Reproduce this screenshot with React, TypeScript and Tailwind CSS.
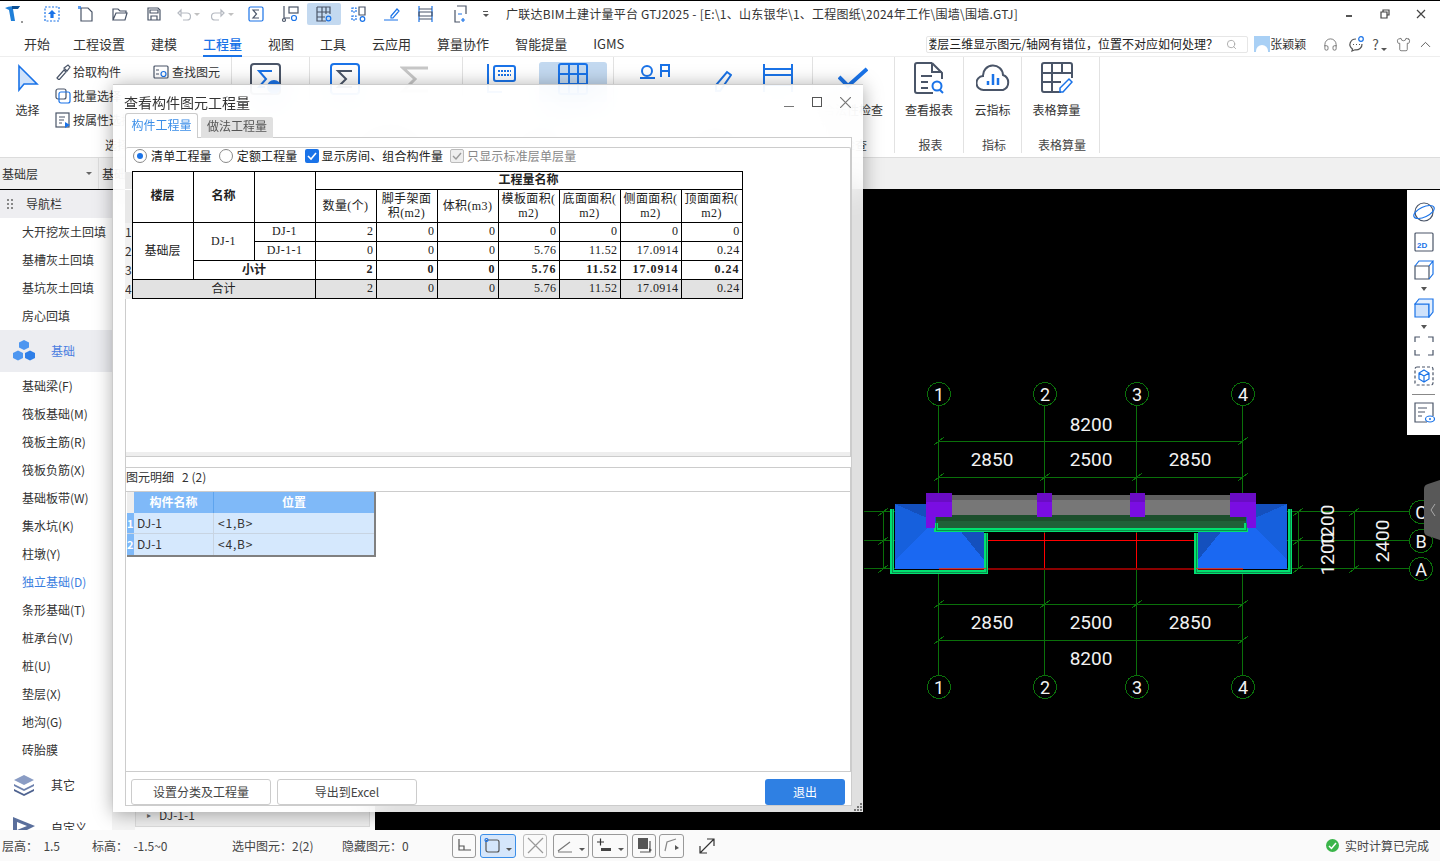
import type { ReactNode } from 'react';
import { ChevronUp, Search, Shirt, Headphones } from 'lucide-react';

const DARK = '#4a5568';
const BLUE = '#1a73e8';

// small svg wrapper, viewBox is always the same as the size so paths stay in pixels
function Ico({ s = 18, children, className = '' }: { s?: number; children: ReactNode; className?: string }) {
    return (
        <svg width={s} height={s} viewBox={`0 0 ${s} ${s}`} fill="none" strokeWidth={1.2} className={`shrink-0 ${className}`}>
            {children}
        </svg>
    );
}

function Caret({ color = '#666' }: { color?: string }) {
    return <span className="inline-block w-0 h-0 border-x-[3px] border-x-transparent border-t-[3px]" style={{ borderTopColor: color }} />;
}

/* ---------- title bar ---------- */
const quickIcons: ReactNode[] = [
    <Ico key="a"><rect x="2" y="2" width="14" height="14" stroke={BLUE} strokeDasharray="2 1.5" /><path d="M9 5l4 4h-2.4v4H7.4V9H5z" fill={BLUE} /></Ico>,
    <Ico key="b"><path d="M4 3h7l4 4v9H4z" stroke={DARK} /><path d="M1 1h3v3H1z" fill={BLUE} opacity=".7" /></Ico>,
    <Ico key="c"><path d="M2 15V4h5l2 2h6v2M2 15h12l2-7H5z" stroke={DARK} /></Ico>,
    <Ico key="d"><path d="M3 3h10l2 2v10H3z" stroke={DARK} /><path d="M6 15v-4h6v4M5 5h8v3H5z" stroke={DARK} /></Ico>,
    <span key="e" className="flex items-center gap-[3px] opacity-40"><Ico s={14}><path d="M4 6h6a3 3 0 010 7H6M1 6l3-3v6z" stroke={DARK} /></Ico><Caret /></span>,
    <span key="f" className="flex items-center gap-[3px] opacity-40"><Ico s={14}><path d="M10 6H4a3 3 0 000 7h4M13 6l-3-3v6z" stroke={DARK} /></Ico><Caret /></span>,
    <Ico key="g"><rect x="2" y="2" width="14" height="14" rx="1.5" stroke={BLUE} /><path d="M12 5H6l3.5 4L6 13h6" stroke={DARK} /></Ico>,
    <Ico key="h"><path d="M3 1v12h6" stroke={DARK} /><rect x="8" y="2" width="9" height="6" stroke={DARK} /><circle cx="3" cy="15" r="1.5" stroke={DARK} /><circle cx="13" cy="13" r="2.5" stroke={BLUE} /></Ico>,
    <Ico key="i"><path d="M2 2h13v7M2 2v14h9M2 7h13M2 12h8M7 2v14M11 2v7" stroke={DARK} /><circle cx="13.5" cy="13.5" r="2.3" stroke={BLUE} /></Ico>,
    <Ico key="j"><path d="M3 3h4v4H3zM3 11h4v4H3z" stroke={BLUE} strokeDasharray="2 1" /><path d="M10 2h6v8h-6z" stroke={DARK} /><circle cx="13.5" cy="14" r="2.3" stroke={BLUE} /></Ico>,
    <Ico key="k"><path d="M8 11l6-7 2 2-6 7H8zM1 15h14" stroke={BLUE} /></Ico>,
    <Ico key="l"><path d="M2 1v16M15 1v16" stroke={BLUE} /><path d="M2 4h13M2 14h13M2 7h13v4H2z" stroke={DARK} /></Ico>,
    <Ico key="m"><path d="M6 1h9v8M4 5v12h5" stroke={DARK} /><path d="M12 13v4M10 15h4M7 9h4" stroke={BLUE} /></Ico>,
];

function TitleBar() {
    return (
        <div className="h-[29px] border-t border-black bg-white flex items-center pb-[2px] shrink-0">
            <div className="w-[35px] pl-[4px] flex items-center">
                <svg width="20" height="20" viewBox="0 0 20 20"><path d="M1 4c4-2 10-2 15-2l-3 3H9l2 12H7L5 6z" fill="#1f7fd8" /><path d="M8 2h8l-2 3H8z" fill="#0c4f94" /><circle cx="18" cy="18" r="1" fill="#777" /></svg>
            </div>
            {quickIcons.map((icon, i) => (
                <div key={i} className={`w-[34px] h-[22px] flex items-center justify-center rounded-[2px] ${i === 8 ? 'bg-[#c3d9f0]' : ''}`}>
                    {icon}
                </div>
            ))}
            <div className="ml-[6px] w-[23px] flex flex-col items-start gap-[2px]">
                <span className="w-[5px] h-px bg-[#555]" />
                <Caret color="#555" />
            </div>
            <div className="text-[12px] text-[#333] whitespace-nowrap tracking-[0.25px]">广联达BIM土建计量平台 GTJ2025 - [E:\1、山东银华\1、工程图纸\2024年工作\围墙\围墙.GTJ]</div>
            <div className="ml-auto flex items-center text-[#444]">
                <div className="w-[37px] flex justify-center"><span className="w-[6px] h-[2px] bg-[#555] mt-[3px]" /></div>
                <div className="w-[36px] flex justify-center">
                    <Ico s={10}><path d="M3 3V1h6v5H7M1 3h6v6H1z" stroke="#444" /></Ico>
                </div>
                <div className="w-[35px] mr-[2px] flex justify-center">
                    <Ico s={10}><path d="M1 1l8 8M9 1l-8 8" stroke="#444" /></Ico>
                </div>
            </div>
        </div>
    );
}

/* ---------- menu bar ---------- */
const menus = ['开始', '工程设置', '建模', '工程量', '视图', '工具', '云应用', '算量协作', '智能提量', 'IGMS'];

function MenuBar() {
    return (
        <div className="h-[28px] bg-white border-b border-[#eee] flex items-stretch shrink-0">
            <div className="flex gap-[26px] pl-[24px] text-[13px] text-[#333]">
                {menus.map(m => (
                    <div key={m} className={`flex items-center pt-[4px] -mb-px border-b-2 ${m === '开始' ? '-mr-[3px]' : ''} ${m === '工程量' ? 'text-[#1a73e8] font-medium border-[#1a73e8]' : 'border-transparent'}`}>{m}</div>
                ))}
            </div>
            <div className="ml-auto flex items-center pr-[6px] pt-[3px]">
                <div className="w-[322px] h-[17px] bg-white border border-[#e6e6e6] rounded-[2px] flex items-center pr-[10px] text-[12px] text-[#222] whitespace-nowrap">
                    {/* the first glyph is clipped in the app as well */}
                    <div className="ml-[2px] flex-1 min-w-0 overflow-hidden">
                        <span className="block -ml-[4px]">楼层三维显示图元/轴网有错位，位置不对应如何处理？</span>
                    </div>
                    <Search size={11} className="text-[#aaa]" />
                </div>
                <div className="ml-[6px] w-[16px] h-[16px] bg-[#a9d0f5] flex items-end justify-center overflow-hidden">
                    <span className="w-[12px] h-[7px] rounded-t-full bg-white" />
                </div>
                <span className="text-[12px] text-[#333]">张颖颖</span>
                <Headphones size={15} strokeWidth={1.2} className="ml-[17px] text-[#555]" />
                <Ico s={16} className="ml-[10px]">
                    <path d="M8 3a6 5.500 0 00-3.500 10L4 15l3-1.200A6 5.500 0 0014 8" stroke="#555" />
                    <path d="M5 8.500h1M8 8.500h1M11 8.500h1" stroke="#555" />
                    <circle cx="13" cy="3" r="2.300" stroke={BLUE} />
                </Ico>
                <span className="ml-[8px] text-[14px] text-[#555] leading-none">?</span>
                <span className="ml-[2px]"><Caret color="#555" /></span>
                <Shirt size={15} strokeWidth={1.2} className="ml-[9px] text-[#555]" />
                <ChevronUp size={17} strokeWidth={1.2} className="ml-[6px] text-[#444]" />
            </div>
        </div>
    );
}

/* ---------- ribbon ---------- */
function Group({ w, label, children, row = false }: { w: number; label: string; children: ReactNode; row?: boolean }) {
    return (
        <div className="flex flex-col shrink-0 mb-[4px] border-r border-[#e2e2e2]" style={{ width: w }}>
            <div className={`flex-1 min-h-0 ${row ? 'flex' : ''}`}>{children}</div>
            <div className="h-[16px] pl-[3px] text-center text-[12px] text-[#444] leading-[16px]">{label}</div>
        </div>
    );
}

function BigTool({ icon, text, w }: { icon: ReactNode; text: string; w?: number }) {
    return (
        <div className="flex flex-col items-center pt-[5px] text-[12px] text-[#333] mx-auto" style={{ width: w }}>
            <div className="h-[32px] flex items-center">{icon}</div>
            <div className="mt-[7px] whitespace-nowrap">{text}</div>
        </div>
    );
}

function Ribbon() {
    return (
        <div className="h-[101px] bg-white border-b border-[#dcdcdc] flex shrink-0">
            <Group w={232} label="选择" row>
                <div className="w-[55px] shrink-0">
                    <BigTool text="选择" w={55} icon={
                        <svg width="22" height="28" viewBox="0 0 22 28"><path d="M2 2l18 18H7l-5 6z" fill="#cfe2fb" stroke={BLUE} strokeWidth="1.6" /></svg>
                    } />
                </div>
                <div className="w-[98px] shrink-0 text-[12px] text-[#333] pt-[3px]">
                    {[
                        { t: '拾取构件', i: <path d="M2 14l7-8 2 2-7 8zM9 4l3 3 3-4-2-2z" stroke={DARK} /> },
                        { t: '批量选择', i: <><rect x="1" y="1" width="10" height="10" rx="2" stroke={DARK} /><rect x="4" y="4" width="11" height="11" rx="2" stroke={BLUE} /></> },
                        { t: '按属性选择', i: <><rect x="1" y="1" width="13" height="14" stroke={DARK} /><path d="M4 5h6M4 8h5M4 11h3" stroke={DARK} /><path d="M10 10l5 3-5 3z" fill={BLUE} /></> },
                    ].map(x => (
                        <div key={x.t} className="h-[24px] flex items-center gap-[2px] whitespace-nowrap"><Ico s={16}>{x.i}</Ico>{x.t}</div>
                    ))}
                </div>
                <div className="text-[12px] text-[#333] pt-[3px]">
                    <div className="h-[24px] flex items-center gap-[3px] whitespace-nowrap">
                        <Ico s={16}><rect x="1" y="2" width="14" height="12" rx="1" stroke={DARK} /><path d="M3 6h3M3 10h3" stroke={DARK} /><circle cx="10.500" cy="10" r="2.500" stroke={BLUE} /></Ico>
                        查找图元
                    </div>
                </div>
            </Group>
            <Group w={78} label="汇总" row>
                <div className="pl-[18px] pt-[6px]">
                    <svg width="32" height="32" viewBox="0 0 32 32" fill="none" strokeWidth="2"><rect x="1" y="1" width="29" height="30" rx="3" stroke={DARK} /><path d="M22 8H9l7 8-7 8h6" stroke={BLUE} /><circle cx="24" cy="24" r="7" fill={BLUE} /></svg>
                </div>
            </Group>
            <Group w={153} label="土建计算" row>
                <div className="pl-[20px] pt-[6px]">
                    <svg width="30" height="32" viewBox="0 0 30 32" fill="none" strokeWidth="2"><rect x="1" y="1" width="28" height="30" rx="3" stroke={BLUE} /><path d="M22 8H8l8 8-8 8h14" stroke={DARK} /></svg>
                </div>
                <div className="pl-[40px] pt-[7px]">
                    <svg width="30" height="30" viewBox="0 0 30 30" fill="none" strokeWidth="3"><path d="M28 4H3l12 11L3 27h25" stroke="#c8c8c8" /></svg>
                </div>
            </Group>
            <Group w={151} label="查询" row>
                <div className="pl-[24px] pt-[6px]">
                    <svg width="30" height="30" viewBox="0 0 30 30" fill="none" strokeWidth="2"><path d="M1 1v28h14" stroke={BLUE} /><rect x="7" y="3" width="21" height="15" rx="2" stroke={BLUE} /><path d="M11 8h13M11 12h13" stroke={BLUE} strokeDasharray="2 1" /></svg>
                </div>
                <div className="ml-[22px] mt-[5px] w-[68px] h-[40px] bg-[#c3d9f0] rounded-t-[3px] flex justify-center pt-[1px]">
                    <svg width="30" height="32" viewBox="0 0 30 32" fill="none" strokeWidth="2"><rect x="1" y="1" width="28" height="30" rx="2" stroke={BLUE} /><path d="M1 11h28M1 21h28M11 1v30M20 1v30" stroke={BLUE} /></svg>
                </div>
            </Group>
            <Group w={199} label="查看" row>
                <div className="pl-[25px] pt-[6px]">
                    <svg width="32" height="30" viewBox="0 0 32 30" fill="none" strokeWidth="2"><circle cx="8" cy="8" r="5" stroke={BLUE} /><path d="M1 15h15M22 14V2h8v12M22 8h8" stroke={BLUE} /></svg>
                </div>
                <div className="pl-[43px] pt-[12px]">
                    <svg width="18" height="24" viewBox="0 0 18 24" fill="none" strokeWidth="2"><path d="M2 22V16L13 3l4 3L6 22z" stroke={BLUE} /></svg>
                </div>
                <div className="pl-[31px] pt-[6px]">
                    <svg width="30" height="30" viewBox="0 0 30 30" fill="none" strokeWidth="2"><path d="M1 1v28M29 1v28" stroke={BLUE} /><path d="M1 6h28M1 12h28M1 22h28" stroke={BLUE} /></svg>
                </div>
            </Group>
            <Group w={82} label="检查" row>
                <div className="pl-[25px] pt-[10px]">
                    <svg width="30" height="22" viewBox="0 0 30 22" fill="none" strokeWidth="4"><path d="M1 10l9 9L29 2" stroke={BLUE} /></svg>
                    <div className="mt-[12px] ml-[-15px] text-[12px] text-[#333] whitespace-nowrap">合法性检查</div>
                </div>
            </Group>
            <Group w={69} label="报表">
                <BigTool text="查看报表" icon={
                    <svg width="32" height="32" viewBox="0 0 32 32" fill="none" strokeWidth="2"><path d="M19 1H4a2 2 0 00-2 2v26a2 2 0 002 2h16M19 1l10 10v6M19 1v9h10" stroke={DARK} /><path d="M8 14h11M8 20h7M8 26h7" stroke={DARK} /><circle cx="24" cy="24" r="4.500" stroke={BLUE} /><path d="M27 28l3 3" stroke={BLUE} /></svg>
                } />
            </Group>
            <Group w={58} label="指标">
                <BigTool text="云指标" icon={
                    <svg width="34" height="30" viewBox="0 0 34 30" fill="none" strokeWidth="2"><path d="M9 27H8a7 7 0 01-1-14 10 10 0 0120-1 8 8 0 010 15z" stroke={DARK} /><path d="M12 22v-4M17 22V11M22 22v-7" stroke={BLUE} strokeWidth="2.500" /></svg>
                } />
            </Group>
            <Group w={78} label="表格算量">
                <div className="pr-[8px]">
                    <BigTool text="表格算量" icon={
                        <svg width="32" height="32" viewBox="0 0 32 32" fill="none" strokeWidth="2"><path d="M20 30H3a2 2 0 01-2-2V3a2 2 0 012-2h26a2 2 0 012 2v13M1 11h30M1 20h19M11 1v29M21 1v10" stroke={DARK} /><path d="M19 30v-4l9-9 3 3-9 10z" stroke={BLUE} strokeWidth="1.500" /></svg>
                    } />
                </div>
            </Group>
        </div>
    );
}

/* ---------- navigation ---------- */
const navTop = ['大开挖灰土回填', '基槽灰土回填', '基坑灰土回填', '房心回填'];
const navFoundation = ['基础梁(F)', '筏板基础(M)', '筏板主筋(R)', '筏板负筋(X)', '基础板带(W)', '集水坑(K)', '柱墩(Y)', '独立基础(D)', '条形基础(T)', '桩承台(V)', '桩(U)', '垫层(X)', '地沟(G)', '砖胎膜'];

function NavItem({ text }: { text: string }) {
    return <div className={`h-[28px] pl-[22px] flex items-center whitespace-nowrap ${text === '独立基础(D)' ? 'text-[#3a7ee0]' : ''}`}>{text}</div>;
}

function Sidebar() {
    return (
        <div className="w-[112px] bg-white text-[12px] text-[#333] shrink-0 overflow-hidden">
            <div className="h-[28px] bg-[#eeeef1] flex items-center pl-[7px]">
                <span className="grid grid-cols-2 gap-[2px] mr-[13px]">
                    {[0, 1, 2, 3, 4, 5].map(i => <span key={i} className="w-[2px] h-[2px] bg-[#888]" />)}
                </span>
                导航栏
            </div>
            {navTop.map(n => <NavItem key={n} text={n} />)}
            <div className="h-[42px] bg-[#ecedf1] flex items-center pl-[12px] gap-[15px] text-[#4a7de0]">
                <svg width="24" height="24" viewBox="0 0 24 24">
                    <path d="M12 1l5 2.500v5L12 11 7 8.500v-5z" fill="#4d96f0" />
                    <path d="M6 11.500l5 2.500v5l-5 2.500-5-2.500v-5z" fill="#4d96f0" />
                    <path d="M18 11.500l5 2.500v5l-5 2.500-5-2.500v-5z" fill="#2f7fe8" />
                </svg>
                基础
            </div>
            {navFoundation.map(n => <NavItem key={n} text={n} />)}
            <div className="h-[40px] mt-[1px] flex items-center pl-[12px] gap-[15px]">
                <svg width="24" height="24" viewBox="0 0 24 24">
                    <path d="M12 2l10 5-10 5L2 7z" fill="#8a9cc4" />
                    <path d="M2 11l10 5 10-5v2l-10 5-10-5z" fill="#6d81ad" />
                    <path d="M2 16l10 5 10-5v2l-10 5-10-5z" fill="#4f6390" />
                </svg>
                其它
            </div>
            <div className="h-[40px] flex items-start pl-[12px] gap-[15px] pt-[2px]">
                <svg width="24" height="22" viewBox="0 0 24 22" className="mt-[9px]"><path d="M1 1l22 9L1 21z" fill="#5a6f9c" /><path d="M5 6l10 4-10 4z" fill="#fff" /></svg>
                <span className="mt-[12px]">自定义</span>
            </div>
        </div>
    );
}

/* ---------- canvas ---------- */
const gridXs = [939, 1045, 1137, 1243];
const G = '#0a700a';

function Bubble({ x, y, t }: { x: number; y: number; t: string }) {
    return (
        <>
            <circle cx={x} cy={y} r="11.5" stroke={G} fill="#000" />
            <text x={x} y={y + 6.5} textAnchor="middle" fill="#f2f2f2" fontSize="18" fontFamily="Roboto, sans-serif">{t}</text>
        </>
    );
}

function DimText({ x, y, t }: { x: number; y: number; t: string }) {
    return <text x={x} y={y + 7} textAnchor="middle" fill="#f2f2f2" fontSize="19" fontFamily="Roboto, sans-serif">{t}</text>;
}

function Tick({ x, y }: { x: number; y: number }) {
    return <path d={`M${x - 5} ${y + 4}L${x + 5} ${y - 4}`} stroke={G} />;
}

function Block({ flip }: { flip?: boolean }) {
    return (
        <g transform={flip ? 'matrix(-1 0 0 1 2182 0)' : undefined}>
            <rect x="895" y="504" width="89" height="65" fill="#1450bd" />
            <path d="M895 504L927 518V528L895 560z" fill="#1660dd" />
            <path d="M895 560L927 528H958L984 560z" fill="#1a68f2" />
            <rect x="895" y="560" width="89" height="9" fill="#1a6af5" />
            <path d="M892 509V572H986V533" fill="none" stroke="#00e070" strokeWidth="4" />
            <path d="M892 509V572H986V533" fill="none" stroke="#0c8f4c" strokeWidth="1" />
        </g>
    );
}

function CadCanvas() {
    return (
        <div className="relative flex-1 bg-black overflow-hidden">
            <svg width="1065" height="640" viewBox="375 190 1065 640" className="block" shapeRendering="crispEdges">
                {/* grid lines */}
                {gridXs.map(x => <rect key={x} x={x - 1} y="405" width="1" height="271" fill={G} />)}
                {[512, 541, 569].map(y => <rect key={y} x="864" y={y - 1} width="546" height="1" fill={G} />)}
                {[441, 477, 604, 640].map(y => <rect key={y} x="939" y={y} width="304" height="1" fill={G} />)}
                {[441, 640].flatMap(y => [939, 1243].map(x => <Tick key={`${x}${y}`} x={x} y={y} />))}
                {[477, 604].flatMap(y => gridXs.map(x => <Tick key={`${x}${y}`} x={x} y={y} />))}
                {/* vertical dimensions */}
                {[883, 1298, 1354].map(x => <rect key={x} x={x} y="512" width="1" height="57" fill={G} />)}
                {[512, 541, 569].flatMap(y => [883, 1298].map(x => <Tick key={`${x}${y}`} x={x} y={y} />))}
                <Tick x={1354} y={512} />
                <Tick x={1354} y={569} />
                <rect x="895" y="534" width="392" height="36" fill="#000" />
                {/* red beams */}
                <rect x="984" y="540" width="214" height="1" fill="#ff0000" />
                <rect x="1044" y="533" width="1" height="35" fill="#ff0000" />
                <rect x="1136" y="533" width="1" height="35" fill="#ff0000" />
                <rect x="939" y="568" width="304" height="2" fill="#8b0000" />
                <Block />
                <Block flip />
                <rect x="939" y="568" width="47" height="1" fill="#c04040" />
                <rect x="1196" y="568" width="47" height="1" fill="#c04040" />
                {/* wall */}
                <rect x="952" y="495" width="278" height="5" fill="#5f5f5f" />
                <rect x="952" y="500" width="278" height="15" fill="#777" />
                {/* strip */}
                <rect x="936" y="515" width="310" height="6" fill="#1c4f2d" />
                <rect x="936" y="521" width="310" height="8" fill="#206038" />
                <path d="M936 523V530H1246V523" fill="none" stroke="#00e070" strokeWidth="4" />
                <path d="M936 523V530H1246V523" fill="none" stroke="#0c8f4c" strokeWidth="1" />
                {/* columns */}
                {[
                    [926, 26], [1037, 15], [1130, 15], [1230, 26],
                ].map(([x, w]) => (
                    <g key={x}>
                        <rect x={x} y="493" width={w} height="9" fill="#6a0cc4" />
                        <rect x={x} y="502" width={w} height="15" fill="#7a0de2" />
                    </g>
                ))}
                <rect x="926" y="517" width="9" height="11" fill="#7a0de2" />
                <rect x="1247" y="517" width="9" height="11" fill="#7a0de2" />
                {gridXs.map((x, i) => <Bubble key={x} x={x} y={394} t={String(i + 1)} />)}
                {gridXs.map((x, i) => <Bubble key={x} x={x} y={687} t={String(i + 1)} />)}
                {[['C', 512], ['B', 541], ['A', 569]].map(([t, y]) => <Bubble key={t} x={1421} y={y as number} t={t as string} />)}
                {[['2850', 992], ['2500', 1091], ['2850', 1190]].map(([t, x]) => (
                    <g key={String(x)}>
                        <DimText x={x as number} y={459} t={t as string} />
                        <DimText x={x as number} y={622} t={t as string} />
                    </g>
                ))}
                <DimText x={1091} y={424} t="8200" />
                <DimText x={1091} y={658} t="8200" />
                <text transform="translate(1334 554) rotate(-90)" textAnchor="middle" fill="#f2f2f2" fontSize="19" fontFamily="Roboto, sans-serif">1200</text>
                <text transform="translate(1334 526) rotate(-90)" textAnchor="middle" fill="#f2f2f2" fontSize="19" fontFamily="Roboto, sans-serif">1200</text>
                <text transform="translate(1389 541) rotate(-90)" textAnchor="middle" fill="#f2f2f2" fontSize="19" fontFamily="Roboto, sans-serif">2400</text>
                {/* collapse handle */}
                <path d="M1440 480L1428 484Q1424 485 1424 489V531Q1424 535 1428 536L1440 540z" fill="#585858" shapeRendering="auto" />
                <path d="M1435 504L1431 510L1435 516" stroke="#aaa" fill="none" shapeRendering="auto" />
            </svg>
            <ViewTools />
        </div>
    );
}

function ViewTools() {
    return (
        <div className="absolute right-0 top-0 w-[33px] h-[245px] bg-white flex flex-col items-center pt-[11px]">
            <Ico s={22}>
                <ellipse cx="11" cy="11" rx="9" ry="9" stroke={DARK} />
                <ellipse cx="11" cy="11" rx="11" ry="5" transform="rotate(-25 11 11)" stroke={BLUE} />
            </Ico>
            <Ico s={20} className="mt-[9px]">
                <rect x="1" y="1" width="18" height="18" rx="1" stroke={DARK} />
                <text x="3" y="16" fontSize="8" fontWeight="700" fill={BLUE} fontFamily="Liberation Sans, sans-serif">2D</text>
            </Ico>
            <Ico s={20} className="mt-[8px]">
                <path d="M1 6h14v13H1z" stroke={DARK} />
                <path d="M1 6l4-5h14l-4 5M15 19l4-5V1" stroke={BLUE} />
            </Ico>
            <span className="mt-[7px]"><span className="block w-0 h-0 border-x-[3.5px] border-x-transparent border-t-[4px] border-t-[#555]" /></span>
            <Ico s={20} className="mt-[7px]">
                <path d="M1 6h14v13H1z" fill="#cfe2fb" stroke={BLUE} />
                <path d="M1 6l4-5h14v13l-4 5V6z" fill="#e4effd" stroke={BLUE} />
            </Ico>
            <span className="mt-[7px]"><span className="block w-0 h-0 border-x-[3.5px] border-x-transparent border-t-[4px] border-t-[#555]" /></span>
            <Ico s={20} className="mt-[7px]">
                <path d="M1 6V1h5M14 1h5v5M1 14v5h5M14 19h5v-5" stroke={DARK} />
            </Ico>
            <Ico s={20} className="mt-[10px]">
                <rect x="1" y="1" width="18" height="18" rx="2" stroke={DARK} strokeDasharray="3 2" />
                <path d="M10 4l5 3v6l-5 3-5-3V7zM5 7l5 3 5-3M10 10v6" stroke={BLUE} />
            </Ico>
            <span className="w-[23px] h-px bg-[#888] mt-[8px]" />
            <Ico s={22} className="mt-[7px]">
                <path d="M14 20H2V1h18v13" stroke={DARK} />
                <path d="M5 6h9M5 10h7M5 14h4" stroke={DARK} />
                <ellipse cx="17" cy="17" rx="4.500" ry="3" stroke={BLUE} />
                <circle cx="17" cy="17" r="1" fill={BLUE} />
            </Ico>
        </div>
    );
}

/* ---------- quantity dialog ---------- */
const SERIF = "font-['Liberation_Serif','Noto_Sans_CJK_SC',serif] text-[12px] tracking-[0.4px]";
const CELL = 'border border-black p-0 px-[2px] pb-[2px] leading-none';
const HEADS: ReactNode[] = [
    <>数量(个)</>,
    <>脚手架面<br />积(m2)</>,
    <>体积(m3)</>,
    <>模板面积(<br />m2)</>,
    <>底面面积(<br />m2)</>,
    <>侧面面积(<br />m2)</>,
    <>顶面面积(<br />m2)</>,
];
const rowA = ['2', '0', '0', '0', '0', '0', '0'];
const rowB = ['0', '0', '0', '5.76', '11.52', '17.0914', '0.24'];
const rowC = ['2', '0', '0', '5.76', '11.52', '17.0914', '0.24'];

function Num({ rows, bold }: { rows: string[]; bold?: boolean }) {
    return (
        <>
            {rows.map((v, i) => (
                <td key={i} className={`${CELL} text-right ${SERIF} ${bold ? 'font-bold !tracking-[1px]' : ''}`}>{v}</td>
            ))}
        </>
    );
}

function RowNo({ n }: { n: number }) {
    return <td className="w-[7px] p-0 bg-[#f0f0f0] text-[12px] text-[#333] leading-none overflow-hidden">{n}</td>;
}

function QuantityTable() {
    return (
        <table className="table-fixed border-collapse w-[617px] text-[12px] text-[#222] text-center -ml-[1px]">
            <colgroup>
                <col className="w-[7px]" />
                {[0, 1, 2, 3, 4, 5, 6, 7, 8, 9].map(i => <col key={i} className="w-[61px]" />)}
            </colgroup>
            <tbody>
                <tr className="h-[18px]">
                    <td className="p-0 bg-[#e8e8e8]" />
                    <td rowSpan={2} className={`${CELL} !pb-[4px] font-bold`}>楼层</td>
                    <td rowSpan={2} className={`${CELL} !pb-[4px] font-bold`}>名称</td>
                    <td rowSpan={2} className={CELL} />
                    <td colSpan={7} className={`${CELL} !pb-[3px] font-bold`}>工程量名称</td>
                </tr>
                <tr className="h-[33px]">
                    <td className="p-0 bg-[#e8e8e8] border-t border-white" />
                    {HEADS.map((h, i) => <td key={i} className={`${CELL} ${SERIF} !px-0 !pb-[1px] !leading-[14px]`}>{h}</td>)}
                </tr>
                <tr className="h-[19px]">
                    <RowNo n={1} />
                    <td rowSpan={3} className={CELL}>基础层</td>
                    <td rowSpan={2} className={`${CELL} ${SERIF}`}>DJ-1</td>
                    <td className={`${CELL} ${SERIF}`}>DJ-1</td>
                    <Num rows={rowA} />
                </tr>
                <tr className="h-[19px]">
                    <RowNo n={2} />
                    <td className={`${CELL} ${SERIF}`}>DJ-1-1</td>
                    <Num rows={rowB} />
                </tr>
                <tr className="h-[19px]">
                    <RowNo n={3} />
                    <td colSpan={2} className={`${CELL} font-bold`}>小计</td>
                    <Num rows={rowC} bold />
                </tr>
                <tr className="h-[19px] bg-[#e2e2e2]">
                    <RowNo n={4} />
                    <td colSpan={3} className={CELL}>合计</td>
                    <Num rows={rowC} />
                </tr>
            </tbody>
        </table>
    );
}

function DetailGrid() {
    const rows = [['1', '<1,B>'], ['2', '<4,B>']];
    return (
        <div className="w-[249px] ml-[1px] border-r-2 border-b-2 border-[#808080] text-[12px] text-[#333]">
            <div className="flex h-[21px] text-white font-bold bg-[#7fb9f8] text-center leading-[19px]">
                <div className="w-[7px] bg-[#eee]" />
                <div className="w-[80px] border-r border-[#5ea4ee]">构件名称</div>
                <div className="flex-1">位置</div>
            </div>
            {rows.map(([n, pos], i) => (
                <div key={n} className={`flex h-[21px] leading-[20px] bg-[#d5e8fd] ${i === 0 ? 'border-b border-[#c8d4e2]' : ''}`}>
                    <div className="w-[7px] bg-[#7fb9f8] text-white font-bold text-[11px] overflow-hidden">{n}</div>
                    <div className="w-[80px] pl-[3px] border-r border-[#c8d4e2]">DJ-1</div>
                    <div className="flex-1 pl-[4px] tracking-[0.8px]">{pos}</div>
                </div>
            ))}
        </div>
    );
}

function Radio({ on, label }: { on?: boolean; label: string }) {
    return (
        <label className="flex items-center gap-[4px]">
            <span className="w-[14px] h-[14px] rounded-full border border-[#888] bg-white flex items-center justify-center">
                {on && <span className="w-[6px] h-[6px] rounded-full bg-[#1a73e8]" />}
            </span>
            {label}
        </label>
    );
}

function Dialog() {
    return (
        <div className="absolute left-[113px] top-[84px] w-[750px] h-[728px] bg-white/88 backdrop-blur-lg border-t border-[#ccc] shadow-[0_2px_18px_rgba(0,0,0,0.35)] flex flex-col pl-[12px] pr-[11px] pb-[6px] z-10">
            <div className="h-[28px] shrink-0 flex items-end relative">
                <span className="-ml-[1px] mb-[1px] text-[14px] text-[#333] leading-[20px]">查看构件图元工程量</span>
                <div className="ml-auto flex items-center gap-[18px] self-center mt-[6px] mr-[1px]">
                    <span className="w-[10px] h-px bg-[#777] mt-[8px]" />
                    <span className="w-[10px] h-[10px] border border-[#555]" />
                    <Ico s={11}><path d="M0 0l11 11M11 0L0 11" stroke="#777" /></Ico>
                </div>
            </div>
            <div className="h-[25px] shrink-0 flex items-end text-[12px] z-10">
                <div className="w-[73px] h-[25px] bg-white border border-b-0 border-[#ccc] rounded-t-[3px] text-[#3b8ee8] text-center leading-[22px]">构件工程量</div>
                <div className="ml-[3px] w-[72px] h-[21px] bg-[#e0e0e0] rounded-t-[2px] text-[#555] text-center leading-[18px]">做法工程量</div>
            </div>
            <div className="flex-1 min-h-0 bg-white border border-[#ccc] mt-[-1px] flex flex-col">
                <div className="h-[9px] shrink-0" />
                <div className="h-[310px] shrink-0 border-t border-r border-[#ccc] rounded-t-[2px] flex flex-col">
                    <div className="h-[23px] shrink-0 pl-[7px] pb-[7px] flex items-center text-[12px] tracking-[0.15px] text-[#222] whitespace-nowrap">
                        <Radio on label="清单工程量" />
                        <span className="ml-[7px]"><Radio label="定额工程量" /></span>
                        <span className="ml-[7px] flex items-center gap-[3px]">
                            <span className="w-[14px] h-[14px] rounded-[2px] bg-[#1a73e8] flex items-center justify-center">
                                <Ico s={10}><path d="M1 5l3 3 5-6" stroke="#fff" strokeWidth={1.6} /></Ico>
                            </span>
                            显示房间、组合构件量
                        </span>
                        <span className="ml-[7px] flex items-center gap-[3px] text-[#888]">
                            <span className="w-[14px] h-[14px] rounded-[2px] bg-[#eee] border border-[#bbb] flex items-center justify-center">
                                <Ico s={10}><path d="M1 5l3 3 5-6" stroke="#999" strokeWidth={1.4} /></Ico>
                            </span>
                            只显示标准层单层量
                        </span>
                    </div>
                    <QuantityTable />
                    <div className="mt-auto h-[5px] bg-[#eee] border-b border-[#ccc]" />
                </div>
                <div className="h-[10px] shrink-0" />
                <div className="flex-1 min-h-0 border-y border-r border-[#ccc]">
                    <div className="h-[24px] leading-[18px] border-b border-[#ccc] text-[12px] text-[#333] whitespace-pre">图元明细   2 (2)</div>
                    <DetailGrid />
                </div>
                <div className="h-[33px] shrink-0 flex items-end pl-[5px] pr-[6px] gap-[6px] text-[12px] text-[#444]">
                    <button className="w-[140px] h-[26px] bg-white border border-[#ccc] rounded-[3px]">设置分类及工程量</button>
                    <button className="w-[140px] h-[26px] bg-white border border-[#ccc] rounded-[3px]">导出到Excel</button>
                    <button className="ml-auto w-[80px] h-[26px] bg-[#2f80e3] text-white rounded-[3px]">退出</button>
                </div>
            </div>
            <div className="absolute right-[1px] bottom-[1px] grid grid-cols-3 gap-[1px]">
                {[0, 1, 2, 3, 4, 5, 6, 7, 8].map(i => <span key={i} className={`w-[2px] h-[2px] ${i === 0 || i === 1 || i === 3 ? 'bg-transparent' : 'bg-[#777]'}`} />)}
            </div>
        </div>
    );
}

/* ---------- status bar ---------- */
const statusButtons: { w: number; ml: number; on?: boolean; off?: boolean; caret?: boolean; icon: ReactNode }[] = [
    { w: 24, ml: 0, icon: <path d="M4 3v11h12M4 10h5v4" stroke="#555" /> },
    { w: 36, ml: 4, on: true, caret: true, icon: <><rect x="3" y="4" width="13" height="12" rx="2" stroke="#555" /><circle cx="3.500" cy="4" r="1.500" stroke={BLUE} /></> },
    { w: 24, ml: 7, off: true, icon: <path d="M2 2l15 15M17 2L2 17" stroke="#999" /> },
    { w: 36, ml: 6, caret: true, icon: <path d="M2 15l12-9M2 16h14" stroke="#777" /> },
    { w: 36, ml: 3, caret: true, icon: <><path d="M2 6h7M5.500 2.500v7" stroke="#333" /><rect x="6" y="12" width="10" height="3" fill="#444" /></> },
    { w: 24, ml: 4, icon: <><rect x="3" y="2" width="10" height="11" fill="#555" /><path d="M5 16h10V5" stroke="#555" /><path d="M14 12l3 2-3 2z" fill="#555" /></> },
    { w: 25, ml: 3, icon: <><path d="M3 15l2-9 9-3" stroke="#888" /><path d="M13 9l4 3-4 2z" fill="#555" /></> },
];

function StatusBar() {
    return (
        <div className="h-[31px] bg-[#fafafa] flex items-center text-[12px] text-[#444] shrink-0 relative z-20 whitespace-pre">
            <span className="w-[92px] pl-[2px]">层高：  1.5</span>
            <span className="w-[140px]">标高：  -1.5~0</span>
            <span className="w-[110px]">选中图元：2(2)</span>
            <span className="w-[110px]">隐藏图元：0</span>
            <div className="flex items-center">
                {statusButtons.map((b, i) => (
                    <div key={i} className={`h-[24px] rounded-[3px] border flex items-center ${b.on ? 'border-[#3b8ee8] bg-[#d5e6fb]' : b.off ? 'border-[#bbb]' : 'border-[#999]'}`} style={{ width: b.w, marginLeft: b.ml }}>
                        <Ico s={19} className="ml-[2px]">{b.icon}</Ico>
                        {b.caret && <span className="ml-[4px]"><Caret color="#555" /></span>}
                    </div>
                ))}
            </div>
            <Ico s={18} className="ml-[14px]"><path d="M2 16L16 2M9 2h7v7M2 9v7h7" stroke="#333" /></Ico>
            <div className="ml-auto pr-[11px] flex items-center gap-[6px]">
                <span className="w-[13px] h-[13px] rounded-full bg-[#3bb54a] flex items-center justify-center">
                    <Ico s={9}><path d="M1 5l2.500 2.500L8 2" stroke="#fff" strokeWidth={1.5} /></Ico>
                </span>
                实时计算已完成
            </div>
        </div>
    );
}

export default function App() {
    return (
        <div className="relative w-[1440px] h-[861px] overflow-hidden bg-white flex flex-col font-['Noto_Sans_CJK_SC','Liberation_Sans',sans-serif]">
            <TitleBar />
            <MenuBar />
            <Ribbon />
            {/* floor selector strip */}
            <div className="h-[32px] bg-[#f0f0f0] border-b border-black flex items-stretch text-[12px] text-[#333] shrink-0">
                <div className="w-[99px] pl-[2px] pr-[6px] flex items-center justify-between border-r border-[#ddd]">基础层<Caret /></div>
                <div className="pl-[3px] flex items-center">基础</div>
            </div>
            <div className="flex-1 min-h-0 flex">
                <Sidebar />
                <div className="w-[23px] bg-[#f5f5f5] shrink-0" />
                <div className="w-[235px] mb-[3px] bg-[#f0f0f0] border-x border-b border-[#ddd] shrink-0 flex flex-col justify-end text-[12px] text-[#333]">
                    <div className="h-[14px] pl-[11px] flex items-center gap-[8px] overflow-hidden mb-[4px]"><span className="text-[8px] text-[#666]">▸</span>DJ-1-1</div>
                </div>
                <div className="w-[5px] bg-white shrink-0" />
                <CadCanvas />
            </div>
            <StatusBar />
            <Dialog />
        </div>
    );
}
